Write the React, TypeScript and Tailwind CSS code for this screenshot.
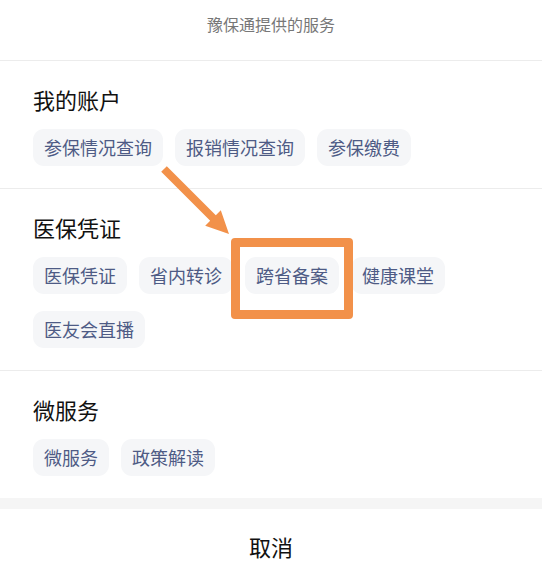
import React from 'react'

const sections = [
  { title: '我的账户', items: ['参保情况查询', '报销情况查询', '参保缴费'] },
  { title: '医保凭证', items: ['医保凭证', '省内转诊', '跨省备案', '健康课堂', '医友会直播'] },
  { title: '微服务', items: ['微服务', '政策解读'] },
]

const font = { fontFamily: '"Noto Sans CJK SC", "Noto Sans", sans-serif' }

const App = () => {
  return (
    <div className="relative w-[542px] h-[586px] bg-white overflow-hidden" style={font}>
      {/* header */}
      <div className="h-[61px] pt-[13px] text-center text-[16px] leading-[22px] text-[#777] border-b border-[#ececec]">
        豫保通提供的服务
      </div>

      {sections.map((s, i) => (
        <div
          key={s.title}
          className={
            'px-[33px] pt-[23px] pb-[22px] ' +
            (i < sections.length - 1 ? 'border-b border-[#ececec]' : '')
          }
        >
          <div className="text-[22px] leading-[30px] text-[#111] mb-[15px]">{s.title}</div>
          <div className="flex flex-wrap gap-x-[12px] gap-y-[17px]">
            {s.items.map((it) => (
              <div
                key={it}
                className="bg-[#f5f6f8] rounded-[11px] px-[11px] py-[6px] text-[18px] leading-[25px] text-[#4e5b85]"
              >
                {it}
              </div>
            ))}
          </div>
        </div>
      ))}

      <div className="h-[11px] bg-[#f5f5f5]" />

      <div className="h-[75px] flex items-center justify-center text-[22px] text-[#111]">
        取消
      </div>

      {/* annotation overlay */}
      <svg className="absolute left-0 top-0 pointer-events-none" width="542" height="586">
        <polygon
          fill="#f2914a"
          points="161.2,171.8 166.8,166.2 215.8,215.2 220.8,210.2 229,234 205.2,225.8 210.2,220.8"
        />
      </svg>
      <div className="absolute left-[231px] top-[238px] w-[122px] h-[81px] border-[9px] border-[#f2914a] rounded-[4px] pointer-events-none" />
    </div>
  )
}

export default App
